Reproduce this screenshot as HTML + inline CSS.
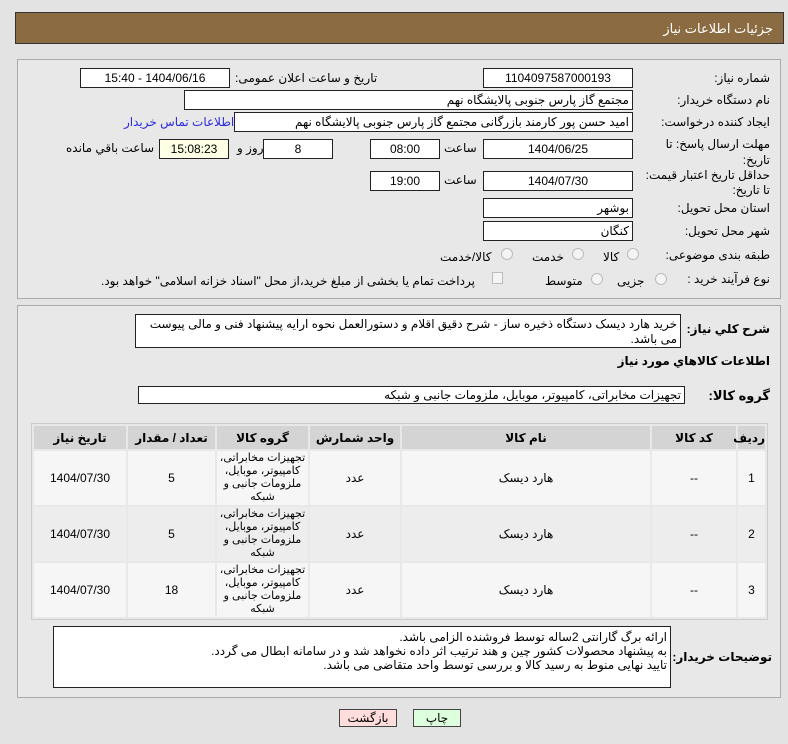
<!DOCTYPE html>
<html><head><meta charset="utf-8"><style>
*{box-sizing:border-box;margin:0;padding:0}
body{width:788px;height:744px;background:#e3e3e3;font-family:"Liberation Sans","DejaVu Sans",sans-serif;font-size:12px;color:#000;position:relative;overflow:hidden;direction:rtl}
.a{position:absolute;white-space:nowrap}
.hdr{left:15px;top:12px;width:769px;height:32px;background:#8b6b42;border:1px solid #333;color:#fff;font-size:13px;padding:8px 10px 0 0;text-align:right}
.panel{position:absolute;left:17px;width:764px;border:1px solid #aaa;background:#e8e8e8}
.box{position:absolute;background:#fff;border:1px solid #222;height:20px;line-height:18px;text-align:center;font-size:12px}
.r{text-align:right;padding-right:3px}
.lbl{position:absolute;white-space:nowrap;font-size:12px}
.radio{position:absolute;width:12px;height:12px;border-radius:50%;border:1px solid #bbb;background:#f4f4f4}
table{position:absolute;left:31px;top:423px;width:737px;border-collapse:separate;border-spacing:2px;background:#e8e8e8;border:1px solid #ccc;table-layout:fixed}
th{background:#d4d4d4;height:23px;font-size:12px;font-weight:bold;padding:0}
td{text-align:center;font-size:12px;padding:0;overflow:hidden}
td.g{font-size:11px;line-height:13px;letter-spacing:-0.3px}
tr.o td{background:#f6f6f6}
tr.e td{background:#ededed}
.btn{position:absolute;top:709px;height:18px;border:1px solid #444;font-size:12px;text-align:center;line-height:16px}
</style></head><body>
<div class="a hdr">جزئیات اطلاعات نیاز</div>
<div class="panel" style="top:59px;height:240px"></div>
<div class="panel" style="top:305px;height:393px"></div>

<div class="lbl" style="right:18px;top:71px">شماره نیاز:</div>
<div class="box" style="left:483px;top:68px;width:150px">1104097587000193</div>
<div class="lbl" style="left:235px;top:71px">تاریخ و ساعت اعلان عمومی:</div>
<div class="box" style="left:80px;top:68px;width:150px">1404/06/16 - 15:40</div>

<div class="lbl" style="right:18px;top:93px">نام دستگاه خریدار:</div>
<div class="box r" style="left:184px;top:90px;width:449px">مجتمع گاز پارس جنوبی  پالایشگاه نهم</div>

<div class="lbl" style="right:18px;top:115px">ایجاد کننده درخواست:</div>
<div class="box r" style="left:234px;top:112px;width:399px">امید حسن پور کارمند بازرگانی مجتمع گاز پارس جنوبی  پالایشگاه نهم</div>
<div class="lbl" style="left:124px;top:115px;color:#2a2ae0">اطلاعات تماس خریدار</div>

<div class="lbl" style="right:18px;top:136px;line-height:16px;text-align:right">مهلت ارسال پاسخ: تا<br>تاریخ:</div>
<div class="box" style="left:483px;top:139px;width:150px">1404/06/25</div>
<div class="lbl" style="left:444px;top:141px">ساعت</div>
<div class="box" style="left:370px;top:139px;width:70px">08:00</div>
<div class="box" style="left:263px;top:139px;width:70px">8</div>
<div class="lbl" style="left:237px;top:141px">روز و</div>
<div class="box" style="left:159px;top:139px;width:70px;background:#ffffe6">15:08:23</div>
<div class="lbl" style="left:66px;top:141px">ساعت باقي مانده</div>

<div class="lbl" style="right:18px;top:168px;line-height:15px;text-align:right">حداقل تاریخ اعتبار قیمت:<br>تا تاریخ:</div>
<div class="box" style="left:483px;top:171px;width:150px">1404/07/30</div>
<div class="lbl" style="left:444px;top:173px">ساعت</div>
<div class="box" style="left:370px;top:171px;width:70px">19:00</div>

<div class="lbl" style="right:18px;top:201px">استان محل تحویل:</div>
<div class="box r" style="left:483px;top:198px;width:150px">بوشهر</div>
<div class="lbl" style="right:18px;top:224px">شهر محل تحویل:</div>
<div class="box r" style="left:483px;top:221px;width:150px">کنگان</div>

<div class="lbl" style="right:18px;top:248px">طبقه بندی موضوعی:</div>
<div class="radio" style="left:627px;top:248px"></div><div class="lbl" style="left:603px;top:250px">کالا</div>
<div class="radio" style="left:572px;top:248px"></div><div class="lbl" style="left:532px;top:250px">خدمت</div>
<div class="radio" style="left:501px;top:248px"></div><div class="lbl" style="left:440px;top:250px">کالا/خدمت</div>

<div class="lbl" style="right:18px;top:272px">نوع فرآیند خرید :</div>
<div class="radio" style="left:655px;top:273px"></div><div class="lbl" style="left:617px;top:274px">جزیی</div>
<div class="radio" style="left:591px;top:273px"></div><div class="lbl" style="left:545px;top:274px">متوسط</div>
<div class="a" style="left:492px;top:272px;width:11px;height:12px;border:1px solid #bbb;background:#f4f4f4"></div>
<div class="lbl" style="left:101px;top:274px">پرداخت تمام یا بخشی از مبلغ خرید،از محل "اسناد خزانه اسلامی" خواهد بود.</div>

<div class="lbl" style="right:18px;top:322px;font-weight:bold">شرح کلي نیاز:</div>
<div class="box r" style="left:135px;top:314px;width:546px;height:34px;line-height:15px;white-space:normal;padding-top:2px">خرید هارد دیسک دستگاه ذخیره ساز - شرح دقیق اقلام و دستورالعمل نحوه ارایه پیشنهاد فنی و مالی پیوست می باشد.</div>
<div class="lbl" style="right:18px;top:354px;font-weight:bold">اطلاعات کالاهاي مورد نیاز</div>
<div class="lbl" style="right:18px;top:388px;font-weight:bold;font-size:13px">گروه کالا:</div>
<div class="box r" style="left:138px;top:386px;width:547px;height:18px;line-height:16px">تجهیزات مخابراتی، کامپیوتر، موبایل، ملزومات جانبی و شبکه</div>

<table>
<colgroup><col style="width:27px"><col style="width:84px"><col style="width:248px"><col style="width:90px"><col style="width:91px"><col style="width:87px"><col></colgroup>
<tr><th>ردیف</th><th>کد کالا</th><th>نام کالا</th><th>واحد شمارش</th><th>گروه کالا</th><th>تعداد / مقدار</th><th>تاریخ نیاز</th></tr>
<tr class="o"><td style="height:54px">1</td><td>--</td><td>هارد دیسک</td><td>عدد</td><td class="g">تجهیزات مخابراتی، کامپیوتر، موبایل، ملزومات جانبی و شبکه</td><td>5</td><td>1404/07/30</td></tr>
<tr class="e"><td style="height:54px">2</td><td>--</td><td>هارد دیسک</td><td>عدد</td><td class="g">تجهیزات مخابراتی، کامپیوتر، موبایل، ملزومات جانبی و شبکه</td><td>5</td><td>1404/07/30</td></tr>
<tr class="o"><td style="height:54px">3</td><td>--</td><td>هارد دیسک</td><td>عدد</td><td class="g">تجهیزات مخابراتی، کامپیوتر، موبایل، ملزومات جانبی و شبکه</td><td>18</td><td>1404/07/30</td></tr>
</table>

<div class="lbl" style="right:16px;top:650px;font-weight:bold;letter-spacing:-0.4px">توضیحات خریدار:</div>
<div class="box r" style="left:53px;top:626px;width:618px;height:62px;line-height:14px;white-space:normal;padding-top:3px">ارائه برگ گارانتی 2ساله توسط فروشنده الزامی باشد.<br>به پیشنهاد محصولات کشور چین و هند ترتیب اثر داده نخواهد شد و در سامانه ابطال می گردد.<br>تایید نهایی منوط به رسید کالا و بررسی توسط واحد متقاضی می باشد.</div>

<div class="btn" style="left:339px;width:58px;background:#fdd">بازگشت</div>
<div class="btn" style="left:413px;width:48px;background:#dfd">چاپ</div>
</body></html>
